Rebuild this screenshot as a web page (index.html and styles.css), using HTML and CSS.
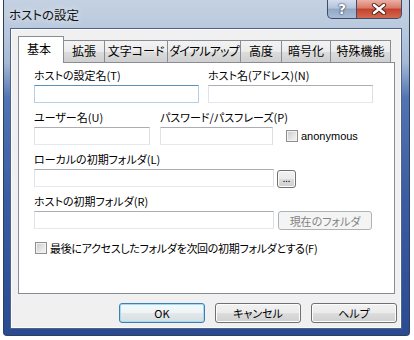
FILE: index.html
```html
<!DOCTYPE html>
<html lang="ja">
<head>
    <meta charset="UTF-8">
    <title>ホストの設定</title>
    <link rel="stylesheet" href="styles.css">
</head>
<body>
    <div class="window">
        <div class="titlebar">
            <span class="title">ホストの設定</span>
            <div class="caption">
                <span class="cap cap-help">?</span>
                <span class="cap cap-close">
                    <svg width="16" height="12" viewBox="0 0 16 12">
                        <path d="M3 2 L13 10 M13 2 L3 10" stroke="#4a1a14" stroke-width="4.2" stroke-linecap="round"/>
                        <path d="M3 2 L13 10 M13 2 L3 10" stroke="#fff" stroke-width="2.6" stroke-linecap="round"/>
                    </svg>
                </span>
            </div>
        </div>

        <div class="client">
            <div class="tabs">
                <span class="tab tab-on tab-basic">基本</span>
                <span class="tab tab-ext">拡張</span>
                <span class="tab tab-code">文字コード</span>
                <span class="tab tab-dial">ダイアルアップ</span>
                <span class="tab tab-adv">高度</span>
                <span class="tab tab-enc">暗号化</span>
                <span class="tab tab-spec">特殊機能</span>
            </div>

            <div class="panel">
                <div class="row">
                    <div class="field w-host">
                        <span class="label">ホストの設定名(T)</span>
                        <input class="text text-focus" type="text">
                    </div>
                    <div class="field w-host">
                        <span class="label">ホスト名(アドレス)(N)</span>
                        <input class="text" type="text">
                    </div>
                </div>

                <div class="row">
                    <div class="field w-user">
                        <span class="label">ユーザー名(U)</span>
                        <input class="text" type="text">
                    </div>
                    <div class="field w-pass">
                        <span class="label">パスワード/パスフレーズ(P)</span>
                        <input class="text" type="password">
                    </div>
                    <label class="check-line anon">
                        <span class="check"></span>
                        <span class="check-text latin">anonymous</span>
                    </label>
                </div>

                <div class="row">
                    <div class="field">
                        <span class="label">ローカルの初期フォルダ(L)</span>
                        <div class="controls">
                            <input class="text w-folder" type="text">
                            <button class="btn btn-browse">...</button>
                        </div>
                    </div>
                </div>

                <div class="row">
                    <div class="field">
                        <span class="label">ホストの初期フォルダ(R)</span>
                        <div class="controls">
                            <input class="text w-folder" type="text">
                            <button class="btn btn-off btn-current" disabled>現在のフォルダ</button>
                        </div>
                    </div>
                </div>

                <label class="check-line last">
                    <span class="check"></span>
                    <span class="check-text">最後にアクセスしたフォルダを次回の初期フォルダとする(F)</span>
                </label>
            </div>

            <div class="actions">
                <button class="btn btn-default btn-main">OK</button>
                <button class="btn btn-main">キャンセル</button>
                <button class="btn btn-main">ヘルプ</button>
            </div>
        </div>
    </div>
</body>
</html>
```

FILE: styles.css
```css
body {
    margin: 0;
    background-color: #fff;
    font-family: "Noto Sans CJK JP", "Liberation Sans", sans-serif;
    font-size: 11px;
    font-feature-settings: "palt";
    color: #000;
}

.window {
    width: 407px;
    height: 336px;
    margin-left: 3px;
    box-sizing: border-box;
    border: 1px solid #2e3f5e;
    border-top: none;
    border-radius: 0 0 4px 4px;
    padding: 0 7px 6px 6px;
    display: flex;
    flex-direction: column;
    background: linear-gradient(to bottom, #c4d1e2 0, #b9c9dd 30px, #a7bad4 62px, #5174b3 98px, #3a5ca2 200px, #2a4b91 100%);
}

/* title bar */
.titlebar {
    height: 28px;
    display: flex;
    align-items: flex-start;
    flex: none;
}

.title {
    margin-left: -1px;
    padding-top: 6px;
    font-size: 12.5px;
    line-height: 18px;
    color: #111;
    text-shadow: 0 0 6px rgba(255, 255, 255, 0.9);
}

.caption {
    margin-left: auto;
    display: flex;
}

.cap {
    height: 19px;
    box-sizing: border-box;
    border: 1px solid #3d4d69;
    border-top: none;
    display: flex;
    align-items: center;
    justify-content: center;
}

.cap-help {
    width: 30px;
    border-radius: 0 0 0 5px;
    background: linear-gradient(to bottom, #d3dded 0, #b4c4da 45%, #93a8c7 50%, #a9bcd6 100%);
    color: #fff;
    font-family: "DejaVu Sans", sans-serif;
    font-weight: bold;
    font-size: 14px;
    text-shadow: 0 0 2px #1d2a44, 0 0 1px #1d2a44;
}

.cap-close {
    width: 45px;
    border-left: none;
    border-radius: 0 0 5px 0;
    background: linear-gradient(to bottom, #eab0a4 0, #d97a68 45%, #c4402c 50%, #d36a52 100%);
}

/* client area */
.client {
    flex: 1;
    background-color: #f0f0f0;
    border: 1px solid #50618a;
    box-shadow: inset 0 0 0 1px #fbfbfb;
    padding: 7px 6px 0 7px;
    display: flex;
    flex-direction: column;
}

.tabs {
    display: flex;
    align-items: flex-end;
    height: 27px;
}

.tab {
    box-sizing: border-box;
    height: 22px;
    margin-bottom: 1px;
    margin-left: -1px;
    border: 1px solid #898c95;
    border-bottom: none;
    background: linear-gradient(to bottom, #f3f3f3 0, #ebebeb 50%, #dddddd 50%, #cfcfcf 100%);
    font-size: 12px;
    line-height: 20px;
    text-align: center;
    white-space: nowrap;
}

.tab-on {
    height: 27px;
    margin-bottom: 0;
    margin-left: 0;
    background: #fff;
    position: relative;
    z-index: 1;
    line-height: 24px;
    padding-right: 4px;
}

.tab-basic { width: 46px; }
.tab-ext { width: 42px; }
.tab-code { width: 64px; }
.tab-dial { width: 74px; letter-spacing: -0.8px; }
.tab-adv { width: 42px; }
.tab-enc { width: 50px; }
.tab-spec { width: 61px; }

.panel {
    height: 232px;
    box-sizing: border-box;
    margin-top: -1px;
    border: 1px solid #898c95;
    background-color: #fff;
    padding: 5px 0 0 15px;
}

.row {
    display: flex;
    align-items: flex-end;
    margin-bottom: 7px;
}

.field {
    display: flex;
    flex-direction: column;
    margin-right: 9px;
}

.label {
    line-height: 14px;
    height: 14px;
    margin-bottom: 3px;
    white-space: nowrap;
}

.text {
    box-sizing: border-box;
    height: 18px;
    margin: 0;
    padding: 0 3px;
    border: 1px solid;
    border-color: #abadb3 #dbdfe6 #e3e9ef #e2e3ea;
    background: #fff;
    font: inherit;
    outline: none;
}

.text-focus {
    border-color: #5c93bc #b5cfe7 #b5cfe7 #b5cfe7;
}

.w-host { width: 165px; }
.w-host .text { width: 165px; }
.w-user { width: 116px; margin-right: 10px; }
.w-user .text { width: 116px; }
.w-pass { width: 113px; }
.w-pass .text { width: 113px; }
.w-folder { width: 240px; }

.controls {
    display: flex;
    align-items: flex-start;
    gap: 3px;
    height: 18px;
}

/* checkbox */
.check-line {
    display: flex;
    align-items: center;
    gap: 3px;
}

.check {
    width: 12px;
    height: 12px;
    box-sizing: border-box;
    border: 1px solid #8f8f8f;
    background: linear-gradient(135deg, #c9c9c9 0, #e4e4e4 55%, #f7f7f7 100%);
    box-shadow: inset 0 0 0 1px #f2f2f2;
    flex: none;
}

.anon {
    margin-left: 4px;
    margin-bottom: 2px;
}

.latin {
    font-family: "Liberation Sans", sans-serif;
    font-size: 11px;
}

.check-text {
    line-height: 14px;
    white-space: nowrap;
}

.last {
    margin-top: 12px;
    margin-left: 1px;
    letter-spacing: -0.3px;
}

/* buttons */
.btn {
    box-sizing: border-box;
    margin: 0;
    padding: 0;
    border: 1px solid #707070;
    border-radius: 3px;
    background: linear-gradient(to bottom, #f2f2f2 0, #ebebeb 50%, #dddddd 50%, #cfcfcf 100%);
    box-shadow: inset 0 0 0 1px #fcfcfc;
    font: inherit;
    color: #000;
}

.btn-browse {
    width: 19px;
    height: 18px;
    margin-top: 1px;
    font-size: 9px;
    line-height: 12px;
}

.btn-current {
    width: 94px;
    height: 19px;
    margin-left: 1px;
}

.btn-off {
    border-color: #adb2b5;
    background: #f4f4f4;
    box-shadow: none;
    color: #838383;
}

.actions {
    display: flex;
    justify-content: flex-end;
    gap: 10px;
    margin-top: 9px;
    margin-right: -2px;
}

.btn-main {
    width: 86px;
    height: 20px;
}

.btn-default {
    border-color: #3c7fb1;
    box-shadow: inset 0 0 0 1px #9fdcf5;
    background: linear-gradient(to bottom, #f4f9fc 0, #eef3f6 50%, #e3e8eb 50%, #d8dde0 100%);
}
```
